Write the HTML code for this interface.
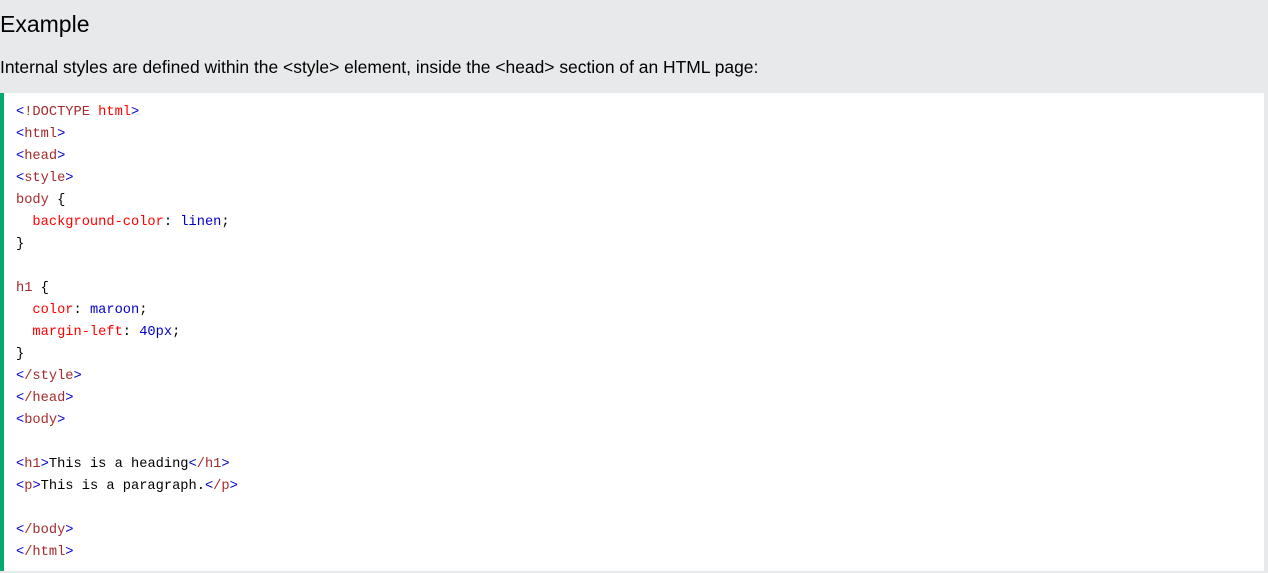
<!DOCTYPE html>
<html><head><style>
body{margin:0;background:#e7e9eb;width:1268px;height:573px;overflow:hidden;font-family:"Liberation Sans",sans-serif;color:#000}
h2{margin:0;position:absolute;left:0;top:9px;font-size:23px;font-weight:normal;line-height:30px}
p{margin:0;position:absolute;left:0;top:57px;font-size:17.45px;line-height:20px}
.code{position:absolute;left:0;top:93px;width:1248px;height:469px;background:#fff;border-left:4px solid #04AA6D;padding:9px 0 0 12px;font-family:"Liberation Mono",monospace;font-size:13.7px;line-height:22px;white-space:pre}
.t{color:#a52a2a}.b{color:#0000cd}.r{color:#f00}.v{color:#0000cd}
</style></head><body>
<h2>Example</h2>
<p>Internal styles are defined within the &lt;style&gt; element, inside the &lt;head&gt; section of an HTML page:</p>
<div class="code"><span class="b">&lt;</span><span class="t">!DOCTYPE</span><span class="r"> html</span><span class="b">&gt;</span>
<span class="b">&lt;</span><span class="t">html</span><span class="b">&gt;</span>
<span class="b">&lt;</span><span class="t">head</span><span class="b">&gt;</span>
<span class="b">&lt;</span><span class="t">style</span><span class="b">&gt;</span>
<span class="t">body </span>{
<span class="r">  background-color</span>: <span class="v">linen</span>;
}

<span class="t">h1 </span>{
<span class="r">  color</span>: <span class="v">maroon</span>;
<span class="r">  margin-left</span>: <span class="v">40px</span>;
}
<span class="b">&lt;</span><span class="t">/style</span><span class="b">&gt;</span>
<span class="b">&lt;</span><span class="t">/head</span><span class="b">&gt;</span>
<span class="b">&lt;</span><span class="t">body</span><span class="b">&gt;</span>

<span class="b">&lt;</span><span class="t">h1</span><span class="b">&gt;</span>This is a heading<span class="b">&lt;</span><span class="t">/h1</span><span class="b">&gt;</span>
<span class="b">&lt;</span><span class="t">p</span><span class="b">&gt;</span>This is a paragraph.<span class="b">&lt;</span><span class="t">/p</span><span class="b">&gt;</span>

<span class="b">&lt;</span><span class="t">/body</span><span class="b">&gt;</span>
<span class="b">&lt;</span><span class="t">/html</span><span class="b">&gt;</span></div>
</body></html>
